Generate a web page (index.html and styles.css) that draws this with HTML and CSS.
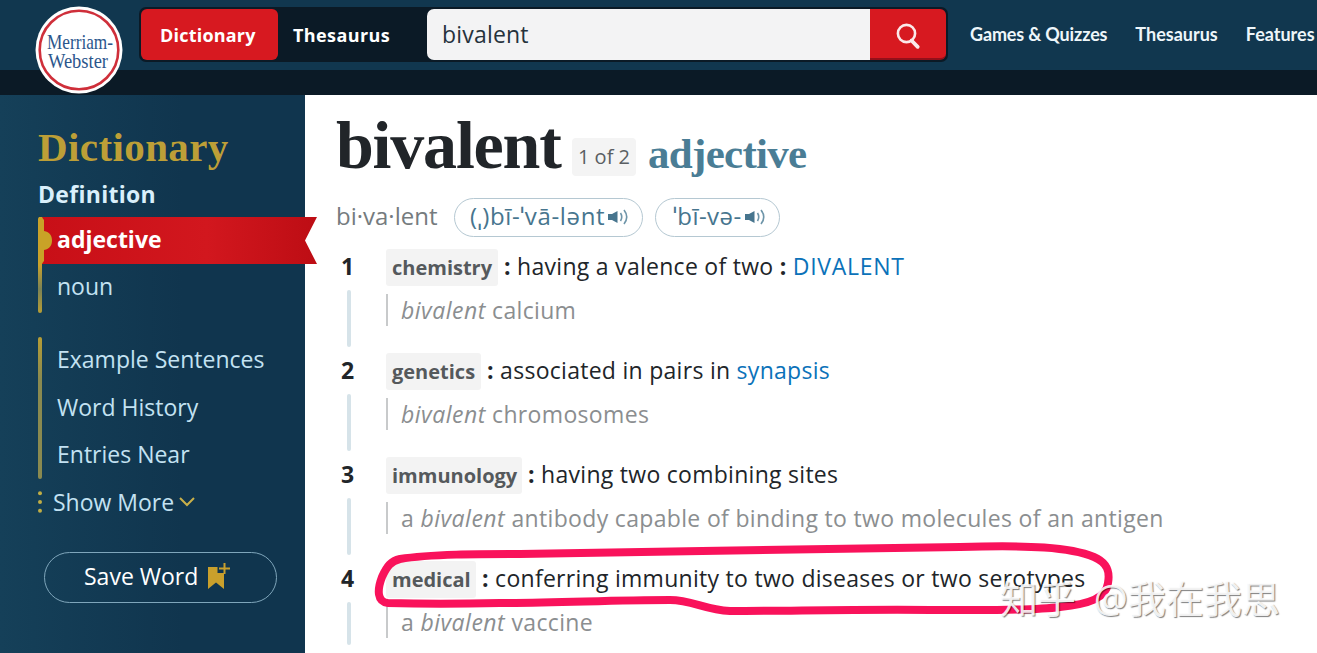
FILE: index.html
```html
<!DOCTYPE html>
<html lang="en">
    <head>
        <meta charset="utf-8">
        <title>Bivalent Definition &amp; Meaning - Merriam-Webster</title>
        <link rel="stylesheet" href="styles.css">
    </head>
    <body>
        <header class="header">
            <svg class="logo" width="88" height="88" viewBox="0 0 88 88">
                <circle cx="44" cy="44" r="43.5" fill="#fff"/>
                <circle cx="44" cy="44" r="39.3" fill="none" stroke="#cf2f3a" stroke-width="2.6"/>
                <text x="12" y="43" textLength="66" lengthAdjust="spacingAndGlyphs">Merriam-</text>
                <text x="13" y="61.500" textLength="60" lengthAdjust="spacingAndGlyphs">Webster</text>
            </svg>
            <form class="search">
                <div class="tab tab-active"><span class="tab-text-1">Dictionary</span></div>
                <div class="tab"><span class="tab-text-2">Thesaurus</span></div>
                <div class="search-input">bivalent</div>
                <div class="search-btn">
                    <svg width="26" height="28" viewBox="0 0 26 28" fill="none" stroke="#fbe9ea">
                        <circle cx="10.5" cy="10.5" r="8.6" stroke-width="2.6"/>
                        <path d="M15.500 17.500l6.200 6.300" stroke-width="3.8" stroke-linecap="round"/>
                    </svg>
                </div>
            </form>
            <nav class="nav">
                <span class="nav-games">Games &amp; Quizzes</span>
                <span>Thesaurus</span>
                <span>Features</span>
            </nav>
        </header>
        <div class="band"></div>

        <div class="page">
            <aside class="sidebar">
                <h2 class="side-title">Dictionary</h2>
                <div class="side-sub">Definition</div>
                <div class="side-group group-pos">
                    <div class="ribbon">
                        <svg class="ribbon-bg" width="278" height="47" viewBox="0 0 278 47">
                            <defs>
                                <linearGradient id="red">
                                    <stop offset="0" stop-color="#c80f17"/>
                                    <stop offset=".6" stop-color="#d2171e"/>
                                    <stop offset="1" stop-color="#bd0d14"/>
                                </linearGradient>
                            </defs>
                            <path d="M3 0H278L266 23.500L278 47H3z" fill="url(#red)"/>
                            <path d="M-1 0H3Q4 2 5 3V14C11 15 13 19 13 23.500S11 32 5 33V44Q4 45 3 47H-1z" fill="#c9a227"/>
                        </svg>
                        <span>adjective</span>
                    </div>
                    <div class="side-link">noun</div>
                </div>
                <div class="side-group group-more">
                    <div class="side-link">Example Sentences</div>
                    <div class="side-link">Word History</div>
                    <div class="side-link">Entries Near</div>
                </div>
                <div class="show-more">
                    <svg width="4" height="22" viewBox="0 0 4 22" fill="#c0ad45">
                        <circle cx="2" cy="2.300" r="2"/>
                        <circle cx="2" cy="11" r="2"/>
                        <circle cx="2" cy="19.700" r="2"/>
                    </svg>
                    <span>Show More</span>
                    <svg class="chevron" width="16" height="10" viewBox="0 0 16 10" fill="none" stroke="#c9b04a" stroke-width="2">
                        <path d="M1 1l7 7 7-7"/>
                    </svg>
                </div>
                <div class="save">
                    <span>Save Word</span>
                    <svg width="22" height="27" viewBox="0 0 22 27">
                        <path d="M0 4H9.500V10H16V26L8 19.500L0 26z" fill="#c9a02c"/>
                        <path d="M16.500 0V11M11 5.500H22" fill="none" stroke="#c9a02c" stroke-width="2"/>
                    </svg>
                </div>
            </aside>

            <main class="entry">
                <div class="head">
                    <h1>bivalent</h1>
                    <span class="count">1 of 2</span>
                    <h2>adjective</h2>
                </div>
                <div class="prons">
                    <span class="syllables">bi·​va·​lent</span>
                    <span class="pron pron-1">
                        <span>(ˌ)bī-ˈvā-lənt</span>
                        <svg class="speaker" width="21" height="18" viewBox="0 0 21 18">
                            <path d="M0 6H4L9.500 3V15L4 12H0z" fill="#47758e"/>
                            <path d="M12.500 5Q15 9 12.500 13M16 2Q21.500 9 16 16" fill="none" stroke="#6e95a9" stroke-width="1.600"/>
                        </svg>
                    </span>
                    <span class="pron pron-2">
                        <span>ˈbī-və-</span>
                        <svg class="speaker" width="21" height="18" viewBox="0 0 21 18">
                            <path d="M0 6H4L9.500 3V15L4 12H0z" fill="#47758e"/>
                            <path d="M12.500 5Q15 9 12.500 13M16 2Q21.500 9 16 16" fill="none" stroke="#6e95a9" stroke-width="1.600"/>
                        </svg>
                    </span>
                </div>

                <div class="sense">
                    <div class="num">1</div>
                    <div class="sense-body">
                        <p class="def"><span class="tag tag-chem">chemistry</span><b>:</b> having a valence of two <b>:</b> <a class="caps">DIVALENT</a></p>
                        <p class="example"><em>bivalent</em> calcium</p>
                    </div>
                </div>
                <div class="sense">
                    <div class="num">2</div>
                    <div class="sense-body">
                        <p class="def"><span class="tag tag-gen">genetics</span><b>:</b> associated in pairs in <a>synapsis</a></p>
                        <p class="example"><em>bivalent</em> chromosomes</p>
                    </div>
                </div>
                <div class="sense">
                    <div class="num">3</div>
                    <div class="sense-body">
                        <p class="def"><span class="tag tag-imm">immunology</span><b>:</b> having two combining sites</p>
                        <p class="example">a <em>bivalent</em> antibody capable of binding to two molecules of an antigen</p>
                    </div>
                </div>
                <div class="sense sense-last">
                    <div class="num">4</div>
                    <div class="sense-body">
                        <p class="def"><span class="tag tag-med">medical</span><b>:</b> conferring immunity to two diseases or two serotypes</p>
                        <p class="example">a <em>bivalent</em> vaccine</p>
                    </div>
                </div>
            </main>
        </div>

        <!-- hand-drawn marker around sense 4 -->
        <svg class="marker" width="750" height="80" viewBox="370 540 750 80">
            <path d="M388 603C377 602 377 590 382 577C387 566 391 561 400 559C430 554 480 554 520 554C650 552 850 548 960 547C1030 545 1070 547 1094 557C1108 563 1110 572 1108 583C1106 598 1090 604 1060 607C1030 611 980 610 940 610C860 609 790 611 730 611C705 610 692 600 670 600C610 600 560 603 500 603C460 604 420 604 388 603z" fill="none" stroke="#f9125b" stroke-width="8" stroke-linejoin="round"/>
        </svg>
        <div class="watermark">知乎 @我在我思</div>
    </body>
</html>
```
FILE: styles.css
```css
* {
    box-sizing: border-box;
}

body {
    position: relative;
    margin: 0;
    width: 1317px;
    height: 653px;
    overflow: hidden;
    background: #fff;
    font-family: "Open Sans", "Noto Sans", sans-serif;
    color: #212529;
}

h1, h2, p {
    margin: 0;
}

/* header */
.header {
    display: flex;
    height: 70px;
    background: #11374f;
}

/* the logo hangs over the dark band */
.logo {
    position: relative;
    flex: none;
    margin: 6px 16px 0 35px;
}

.logo text {
    font-family: "Liberation Serif", serif;
    font-size: 22px;
    fill: #2b568c;
}

.search {
    display: flex;
    flex: none;
    width: 809px;
    height: 55px;
    margin-top: 7px;
    padding: 2px;
    border-radius: 7px;
    background: #0b1a26;
}

.tab {
    width: 149px;
    padding-left: 15px;
    line-height: 52px;
    font-size: 18px;
    font-weight: 700;
    color: #fff;
}

.tab-active {
    width: 137px;
    height: 51px;
    padding-left: 19px;
    border-radius: 6px;
    background: #d71920;
}

.tab-text-1 {
    letter-spacing: .2px;
}

.tab-text-2 {
    letter-spacing: .4px;
}

.search-input {
    width: 443px;
    height: 51px;
    padding-left: 15px;
    border-radius: 7px 0 0 7px;
    background: #f3f3f4;
    line-height: 51px;
    font-size: 23px;
    letter-spacing: .2px;
    color: #26323c;
}

.search-btn {
    width: 76px;
    height: 51px;
    padding: 14px 0 0 26px;
    border-bottom: 2px solid #94101a;
    border-radius: 0 6px 6px 0;
    background: #d71920;
}

.nav {
    display: flex;
    margin-left: 22px;
    gap: 28px;
    line-height: 69px;
    font-family: Lato, sans-serif;
    font-size: 18px;
    font-weight: 700;
    white-space: nowrap;
    color: #eef6fa;
}

.nav-games {
    letter-spacing: -.150px;
}

.band {
    height: 25px;
    background: #0b1a26;
}

.page {
    display: flex;
    height: 558px;
}

/* sidebar */
.sidebar {
    flex: none;
    width: 305px;
    padding: 28px 0 0 38px;
    background: linear-gradient(90deg, #154059, #10354e 60%);
    color: #c3e2f2;
}

.side-title {
    height: 50px;
    line-height: 48px;
    font-family: "Liberation Serif", serif;
    font-size: 41px;
    font-weight: 700;
    letter-spacing: .4px;
    color: #bd9f37;
}

.side-sub {
    height: 44px;
    line-height: 42px;
    font-size: 23px;
    font-weight: 700;
    letter-spacing: .3px;
    color: #d9effb;
}

.side-group {
    position: relative;
    padding-left: 19px;
}

.side-group::before {
    content: '';
    position: absolute;
    left: 0;
    top: 0;
    width: 4px;
    height: 100%;
    border-radius: 2px;
}

.group-pos {
    height: 96px;
}

.group-pos::before {
    background: linear-gradient(#c9a22c 50%, #7c8355 75%, #b69d35);
}

.group-more {
    height: 142px;
    margin-top: 24px;
}

.group-more::before {
    background: linear-gradient(#b69d35, #8a8a50 30%, #8a8a50);
}

.ribbon {
    height: 47px;
    line-height: 44px;
    font-size: 23px;
    font-weight: 700;
    color: #fff;
}

.ribbon span {
    position: relative;
}

.ribbon-bg {
    position: absolute;
    left: 1px;
    top: 0;
}

.side-link {
    height: 47.500px;
    line-height: 45px;
    font-size: 23px;
}

.show-more {
    display: flex;
    align-items: center;
    height: 46px;
    font-size: 23px;
    line-height: 44px;
}

.show-more span {
    margin: -1px 0 0 11px;
}

.show-more .chevron {
    margin-left: 5px;
}

.save {
    display: flex;
    align-items: center;
    width: 233px;
    height: 51px;
    margin: 27px 0 0 6px;
    padding: 0 0 3px 39px;
    border: 1px solid #7fa6bb;
    border-radius: 26px;
    font-size: 23px;
    color: #fff;
}

.save svg {
    margin-left: 10px;
}

/* entry */
.entry {
    padding: 15px 0 0 31px;
    white-space: nowrap;
}

.head {
    display: flex;
    height: 80px;
    font-family: "Liberation Serif", serif;
}

.head h1 {
    width: 236px;
    line-height: 70px;
    font-size: 68px;
    letter-spacing: -1.200px;
    color: #212529;
}

.count {
    width: 64px;
    height: 38px;
    margin-top: 28px;
    border-radius: 4px;
    background: #f4f4f4;
    text-align: center;
    line-height: 38px;
    font-family: "Open Sans", sans-serif;
    font-size: 20px;
    color: #5a5f63;
}

.head h2 {
    margin-left: 12px;
    line-height: 87px;
    font-size: 43px;
    letter-spacing: -.700px;
    color: #4a7d95;
}

.prons {
    display: flex;
    height: 59px;
    padding-top: 8px;
    font-size: 24px;
    line-height: 35px;
}

.syllables {
    width: 118px;
    color: #757b7e;
}

.pron {
    display: flex;
    height: 39px;
    border: 1px solid #b5c8d2;
    border-radius: 20px;
    line-height: 33px;
    color: #47758e;
}

.pron-1 {
    width: 189px;
    padding-left: 15px;
    letter-spacing: .650px;
}

.pron-2 {
    width: 125px;
    margin-left: 12px;
    padding-left: 17px;
    letter-spacing: .450px;
}

.speaker {
    margin: 9px 0 0 3px;
}

.sense {
    position: relative;
    display: flex;
    height: 104px;
}

/* line running down to the next number */
.sense::before {
    content: '';
    position: absolute;
    left: 11px;
    top: 41px;
    width: 4px;
    height: 57px;
    border-radius: 2px;
    background: #d6e3e9;
}

.sense-last::before {
    height: 43px;
}

.num {
    width: 50px;
    padding-left: 5px;
    line-height: 35px;
    font-size: 23px;
    font-weight: 700;
}

.def {
    height: 45px;
    line-height: 35px;
    font-size: 23px;
    letter-spacing: .280px;
}

.def a {
    color: #0b72b9;
}

.def .caps {
    font-weight: 500;
    letter-spacing: .7px;
}

.tag {
    display: inline-block;
    height: 37px;
    margin-right: 6px;
    padding-left: 6px;
    border-radius: 3px;
    background: #f3f3f3;
    vertical-align: top;
    line-height: 38px;
    font-size: 20px;
    font-weight: 700;
    letter-spacing: 0;
    color: #55595c;
}

.tag-chem {
    width: 112px;
}

.tag-gen {
    width: 95px;
}

.tag-imm {
    width: 136px;
}

.tag-med {
    width: 90px;
}

.example {
    height: 32px;
    padding-left: 13px;
    border-left: 2px solid #c8cacb;
    line-height: 32px;
    font-size: 23px;
    letter-spacing: .330px;
    color: #8b8e90;
}

.example em {
    letter-spacing: .5px;
}

.marker {
    position: absolute;
    left: 370px;
    top: 540px;
}

.watermark {
    position: absolute;
    left: 1000px;
    top: 570px;
    line-height: 56px;
    font-family: "Open Sans", "Noto Sans CJK SC", sans-serif;
    font-size: 38px;
    word-spacing: 8px;
    white-space: nowrap;
    color: rgba(255, 255, 255, .9);
    text-shadow: 1px 1px 1px rgba(0, 0, 0, .5);
}
```
